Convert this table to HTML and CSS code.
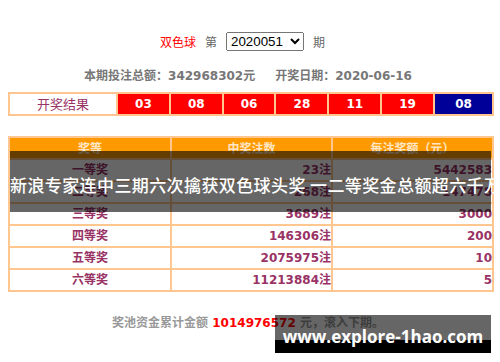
FILE: index.html
```html
<!DOCTYPE html>
<html lang="zh-CN">
<head>
<meta charset="utf-8">
<title>双色球 2020051 期</title>
<link rel="stylesheet" href="styles.css">
</head>
<body>
<div class="page">
  <div class="issue">
    <span class="lottery">双色球</span>
    <span class="label">第</span>
    <select class="issue-select"><option>2020051</option></select>
    <span class="label">期</span>
  </div>
  <div class="summary">
    <span>本期投注总额：342968302元</span>
    <span>开奖日期：2020-06-16</span>
  </div>
  <div class="balls">
    <div class="ball-title">开奖结果</div>
    <div class="ball red">03</div>
    <div class="ball red">08</div>
    <div class="ball red">06</div>
    <div class="ball red">28</div>
    <div class="ball red">11</div>
    <div class="ball red">19</div>
    <div class="ball blue">08</div>
  </div>
  <div class="prizes">
    <div class="head">奖等</div><div class="head">中奖注数</div><div class="head">每注奖额（元）</div>
    <div class="c1">一等奖</div><div class="cn">23注</div><div class="cn">5442583</div>
    <div class="c1">二等奖</div><div class="cn">268注</div><div class="cn">147478</div>
    <div class="c1">三等奖</div><div class="cn">3689注</div><div class="cn">3000</div>
    <div class="c1">四等奖</div><div class="cn">146306注</div><div class="cn">200</div>
    <div class="c1">五等奖</div><div class="cn">2075975注</div><div class="cn">10</div>
    <div class="c1">六等奖</div><div class="cn">11213884注</div><div class="cn">5</div>
  </div>
  <div class="pool">奖池资金累计金额 <span class="pool-num">1014976572</span> 元，滚入下期。</div>
</div>
<div class="band">新浪专家连中三期六次擒获双色球头奖 一二等奖金总额超六千万</div>
<div class="watermark">www.explore-1hao.com</div>
</body>
</html>
```

FILE: styles.css
```css
html, body {
  background: #fff;
}
body {
  margin: 8px;
  font-family: "DejaVu Sans", "Noto Sans CJK SC", sans-serif;
  font-size: 12px;
  position: relative;
  width: 486px;
  height: 346px;
}
.page {
  width: 486px;
}
.issue {
  margin-top: 22px;
  height: 22px;
  display: flex;
  align-items: center;
  justify-content: center;
  gap: 9px;
  padding-right: 17px;
  font-family: "Noto Sans CJK SC", sans-serif;
  color: #666;
}
.lottery {
  color: #f00;
}
.issue-select {
  font-family: "Liberation Sans", Arial, sans-serif;
  font-size: 13.33px;
  height: 19px;
  width: 78px;
  color: #000;
}
.summary {
  margin-top: 14px;
  line-height: 20px;
  display: flex;
  justify-content: center;
  gap: 20px;
  padding-right: 6px;
  color: #777;
  font-weight: bold;
}
.balls {
  margin-top: 6px;
  display: grid;
  grid-template-columns: 106px repeat(6, 1fr) 57px;
  gap: 2px;
  padding: 2px;
  background: #ffc68f;
}
.balls > div {
  height: 20px;
  line-height: 20px;
  text-align: center;
}
.ball-title {
  background: #fff;
  color: #936;
  font-family: "Noto Sans CJK SC", sans-serif;
  font-size: 13px;
}
.ball {
  color: #fff;
  font-weight: bold;
  font-size: 12px;
}
.red {
  background: #f00;
}
.blue {
  background: #009;
}
.prizes {
  margin-top: 20px;
  display: grid;
  grid-template-columns: 160px 159px 1fr;
  gap: 2px;
  padding: 2px;
  background: #ffc68f;
}
.prizes > div {
  height: 20px;
  line-height: 20px;
  background: #fff;
  color: #936;
  font-weight: bold;
}
.prizes > .head {
  background: #f90;
  color: #ffe6c4;
  text-align: center;
  font-family: "Noto Sans CJK SC", sans-serif;
}
.c1 {
  text-align: center;
}
.cn {
  text-align: right;
}
.pool {
  margin-top: 21px;
  line-height: 20px;
  text-align: center;
  padding-right: 6px;
  color: #999;
  font-weight: bold;
}
.pool-num {
  color: #f00;
}
.band {
  position: absolute;
  left: 2px;
  top: 143px;
  width: 481px;
  height: 61px;
  background: rgba(0, 0, 0, 0.6);
  color: #fff;
  font-family: "Noto Sans CJK SC", sans-serif;
  font-size: 17px;
  letter-spacing: 0.4px;
  font-weight: 500;
  padding-top: 6px;
  box-sizing: border-box;
  line-height: 55px;
  text-align: center;
  white-space: nowrap;
}
.watermark {
  position: absolute;
  left: 267px;
  top: 307px;
  width: 216px;
  height: 38px;
  background: linear-gradient(rgba(0, 0, 0, 0.6) 0 25px, #000 25px);
  color: #fff;
  font-family: "Open Sans", sans-serif;
  font-weight: bold;
  font-size: 17px;
  line-height: 20px;
  padding-top: 12px;
  box-sizing: border-box;
  text-align: center;
}
```
